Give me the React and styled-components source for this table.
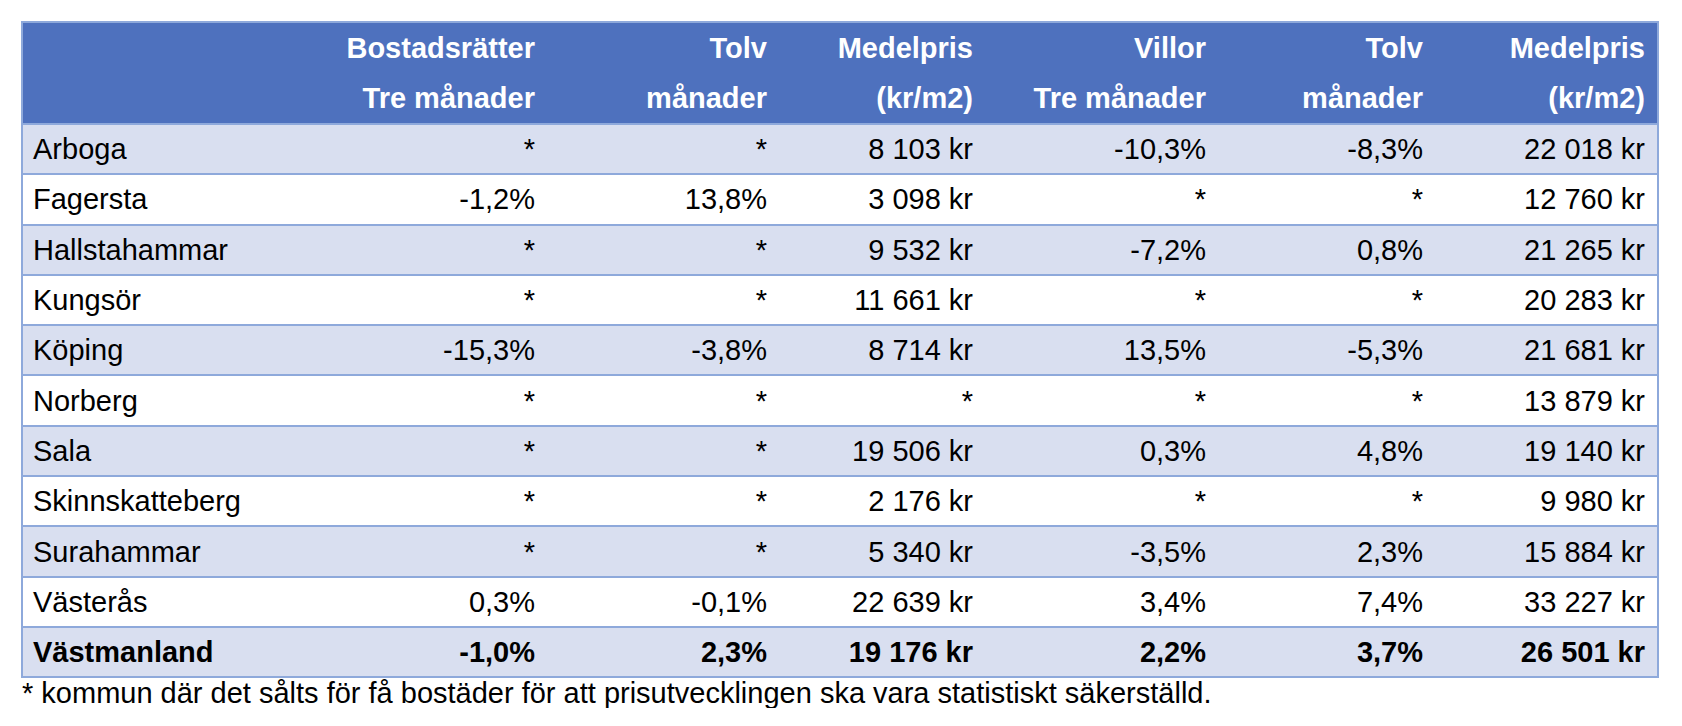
import React from "react";
import styled, { createGlobalStyle } from "styled-components";

const Global = createGlobalStyle`
  html, body { margin: 0; padding: 0; background: #ffffff; }
  body { font-family: "Liberation Sans", Arial, Helvetica, sans-serif; color: #000; }
`;

const Page = styled.div`
  padding: 21px 0 0 21px;
  width: 1636px;
`;

const Table = styled.table`
  width: 1636px;
  table-layout: fixed;
  border-collapse: collapse;
  border: 2px solid #8ea9db;
  font-size: 29px;
`;

const HeadCell = styled.th`
  background: #4e71be;
  color: #ffffff;
  font-weight: 700;
  text-align: right;
  vertical-align: bottom;
  padding: 0 12px 0 0;
  line-height: 50px;
  height: 100px;
  border-bottom: 2px solid #8ea9db;
  white-space: nowrap;
`;

const HeadLine = styled.span`
  display: block;
`;

const Row = styled.tr`
  background: ${(p) => (p.$shaded ? "#d9dff0" : "#ffffff")};
  font-weight: ${(p) => (p.$total ? 700 : 400)};
`;

const Cell = styled.td`
  height: 48.3px;
  padding: 0 ${(p) => (p.$name ? "0 0 10px" : "12px 0 0")};
  text-align: ${(p) => (p.$name ? "left" : "right")};
  vertical-align: middle;
  line-height: 48px;
  border-bottom: 2px solid #8ea9db;
  white-space: nowrap;
`;

const Footnote = styled.p`
  margin: 0;
  padding: 0 0 0 1px;
  font-size: 29px;
  line-height: 30px;
  color: #000;
  white-space: nowrap;
`;

const widths = [293, 232, 232, 206, 233, 217, 223];

const headers = [
  ["", ""],
  ["Bostadsrätter", "Tre månader"],
  ["Tolv", "månader"],
  ["Medelpris", "(kr/m2)"],
  ["Villor", "Tre månader"],
  ["Tolv", "månader"],
  ["Medelpris", "(kr/m2)"],
];

const rows = [
  ["Arboga", "*", "*", "8 103 kr", "-10,3%", "-8,3%", "22 018 kr"],
  ["Fagersta", "-1,2%", "13,8%", "3 098 kr", "*", "*", "12 760 kr"],
  ["Hallstahammar", "*", "*", "9 532 kr", "-7,2%", "0,8%", "21 265 kr"],
  ["Kungsör", "*", "*", "11 661 kr", "*", "*", "20 283 kr"],
  ["Köping", "-15,3%", "-3,8%", "8 714 kr", "13,5%", "-5,3%", "21 681 kr"],
  ["Norberg", "*", "*", "*", "*", "*", "13 879 kr"],
  ["Sala", "*", "*", "19 506 kr", "0,3%", "4,8%", "19 140 kr"],
  ["Skinnskatteberg", "*", "*", "2 176 kr", "*", "*", "9 980 kr"],
  ["Surahammar", "*", "*", "5 340 kr", "-3,5%", "2,3%", "15 884 kr"],
  ["Västerås", "0,3%", "-0,1%", "22 639 kr", "3,4%", "7,4%", "33 227 kr"],
  ["Västmanland", "-1,0%", "2,3%", "19 176 kr", "2,2%", "3,7%", "26 501 kr"],
];

export default function App() {
  return (
    <>
      <Global />
      <Page>
        <Table>
          <colgroup>
            {widths.map((w, i) => (
              <col key={i} style={{ width: w }} />
            ))}
          </colgroup>
          <thead>
            <tr>
              {headers.map(([a, b], i) => (
                <HeadCell key={i}>
                  <HeadLine>{a || "\u00a0"}</HeadLine>
                  <HeadLine>{b || "\u00a0"}</HeadLine>
                </HeadCell>
              ))}
            </tr>
          </thead>
          <tbody>
            {rows.map((r, ri) => (
              <Row key={ri} $shaded={ri % 2 === 0} $total={ri === rows.length - 1}>
                {r.map((v, ci) => (
                  <Cell key={ci} $name={ci === 0}>
                    {v}
                  </Cell>
                ))}
              </Row>
            ))}
          </tbody>
        </Table>
        <Footnote>
          * kommun där det sålts för få bostäder för att prisutvecklingen ska vara statistiskt säkerställd.
        </Footnote>
      </Page>
    </>
  );
}
